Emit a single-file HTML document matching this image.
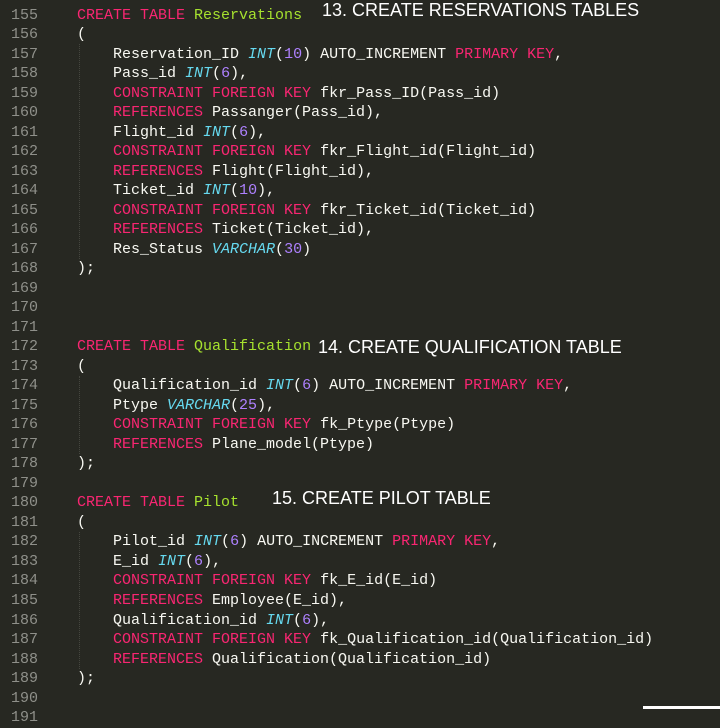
<!DOCTYPE html>
<html><head><meta charset="utf-8"><style>
html,body{margin:0;padding:0;}
body{width:720px;height:709px;background:#272822;overflow:hidden;position:relative;}
.code{position:absolute;left:0;top:-14px;font-family:"Liberation Mono",monospace;font-size:15px;line-height:19.51px;white-space:pre;color:#F8F8F2;}
.ln{display:inline-block;width:38px;text-align:right;color:#8F908A;margin-right:39px;}
.k{color:#F92672}.g{color:#A6E22E}.t{color:#66D9EF;font-style:italic}.n{color:#AE81FF}
.h{position:absolute;font-family:"Liberation Sans",Arial,sans-serif;font-size:18px;color:#fff;white-space:nowrap;}
.guide{position:absolute;left:79px;width:0;border-left:1px dotted #45463f;}
</style></head><body>
<div class="guide" style="top:44px;height:215px"></div>
<div class="guide" style="top:376px;height:78px"></div>
<div class="guide" style="top:532px;height:137px"></div>
<div class="code"><span class="ln">154</span>
<span class="ln">155</span><span class="k">CREATE TABLE</span> <span class="g">Reservations</span>
<span class="ln">156</span>(
<span class="ln">157</span>    Reservation_ID <span class="t">INT</span>(<span class="n">10</span>) AUTO_INCREMENT <span class="k">PRIMARY KEY</span>,
<span class="ln">158</span>    Pass_id <span class="t">INT</span>(<span class="n">6</span>),
<span class="ln">159</span>    <span class="k">CONSTRAINT FOREIGN KEY</span> fkr_Pass_ID(Pass_id)
<span class="ln">160</span>    <span class="k">REFERENCES</span> Passanger(Pass_id),
<span class="ln">161</span>    Flight_id <span class="t">INT</span>(<span class="n">6</span>),
<span class="ln">162</span>    <span class="k">CONSTRAINT FOREIGN KEY</span> fkr_Flight_id(Flight_id)
<span class="ln">163</span>    <span class="k">REFERENCES</span> Flight(Flight_id),
<span class="ln">164</span>    Ticket_id <span class="t">INT</span>(<span class="n">10</span>),
<span class="ln">165</span>    <span class="k">CONSTRAINT FOREIGN KEY</span> fkr_Ticket_id(Ticket_id)
<span class="ln">166</span>    <span class="k">REFERENCES</span> Ticket(Ticket_id),
<span class="ln">167</span>    Res_Status <span class="t">VARCHAR</span>(<span class="n">30</span>)
<span class="ln">168</span>);
<span class="ln">169</span>
<span class="ln">170</span>
<span class="ln">171</span>
<span class="ln">172</span><span class="k">CREATE TABLE</span> <span class="g">Qualification</span>
<span class="ln">173</span>(
<span class="ln">174</span>    Qualification_id <span class="t">INT</span>(<span class="n">6</span>) AUTO_INCREMENT <span class="k">PRIMARY KEY</span>,
<span class="ln">175</span>    Ptype <span class="t">VARCHAR</span>(<span class="n">25</span>),
<span class="ln">176</span>    <span class="k">CONSTRAINT FOREIGN KEY</span> fk_Ptype(Ptype)
<span class="ln">177</span>    <span class="k">REFERENCES</span> Plane_model(Ptype)
<span class="ln">178</span>);
<span class="ln">179</span>
<span class="ln">180</span><span class="k">CREATE TABLE</span> <span class="g">Pilot</span>
<span class="ln">181</span>(
<span class="ln">182</span>    Pilot_id <span class="t">INT</span>(<span class="n">6</span>) AUTO_INCREMENT <span class="k">PRIMARY KEY</span>,
<span class="ln">183</span>    E_id <span class="t">INT</span>(<span class="n">6</span>),
<span class="ln">184</span>    <span class="k">CONSTRAINT FOREIGN KEY</span> fk_E_id(E_id)
<span class="ln">185</span>    <span class="k">REFERENCES</span> Employee(E_id),
<span class="ln">186</span>    Qualification_id <span class="t">INT</span>(<span class="n">6</span>),
<span class="ln">187</span>    <span class="k">CONSTRAINT FOREIGN KEY</span> fk_Qualification_id(Qualification_id)
<span class="ln">188</span>    <span class="k">REFERENCES</span> Qualification(Qualification_id)
<span class="ln">189</span>);
<span class="ln">190</span>
<span class="ln">191</span></div>
<div class="h" style="left:322px;top:0px;">13. CREATE RESERVATIONS TABLES</div>
<div class="h" style="left:318px;top:337px;">14. CREATE QUALIFICATION TABLE</div>
<div class="h" style="left:272px;top:488px;">15. CREATE PILOT TABLE</div>
<div style="position:absolute;left:643px;top:706px;width:77px;height:3px;background:#fff"></div>
</body></html>
